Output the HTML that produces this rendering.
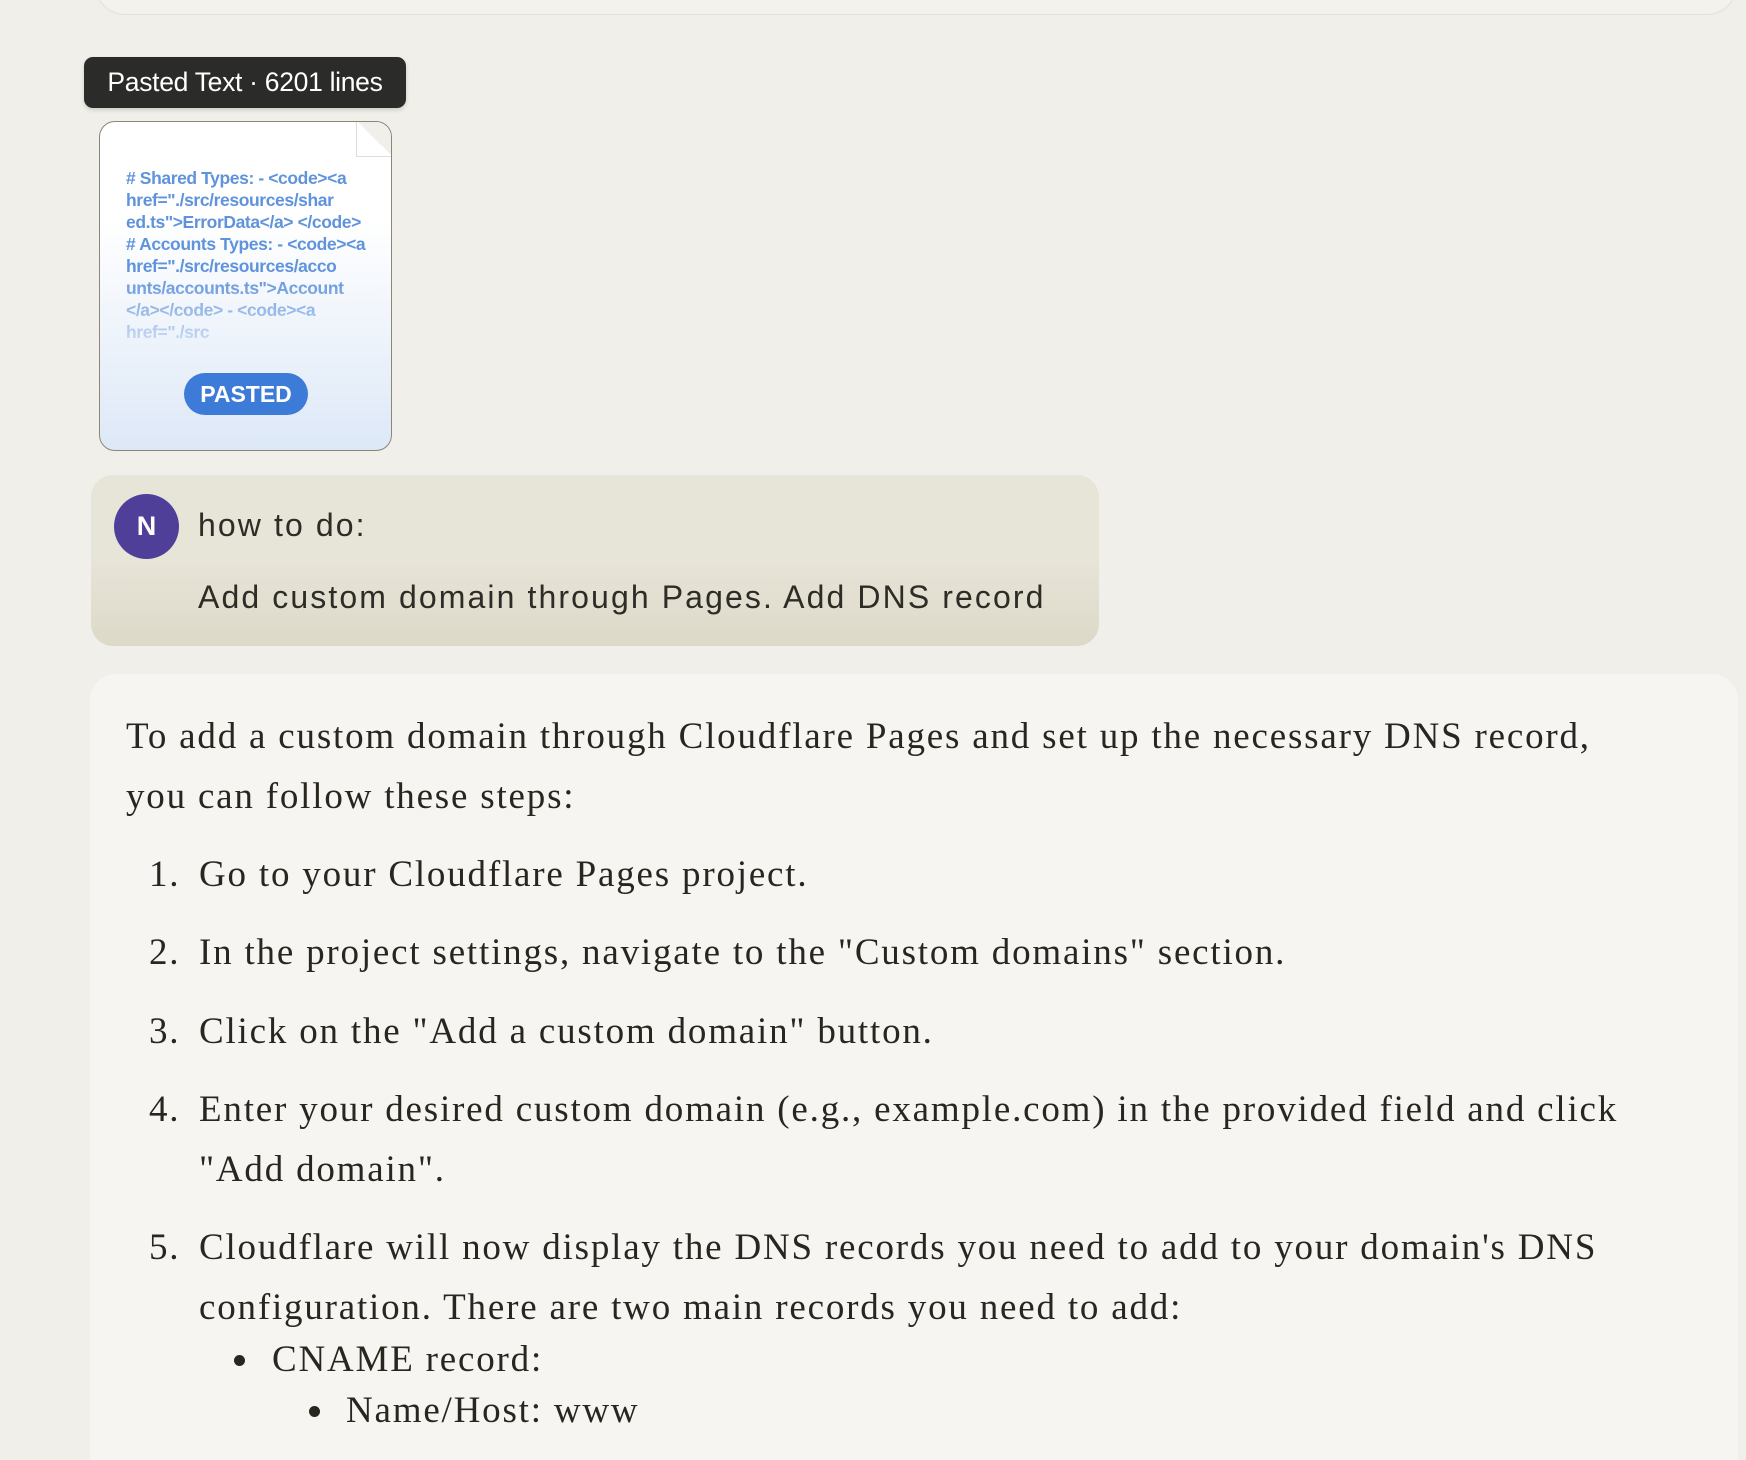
<!DOCTYPE html>
<html><head><meta charset="utf-8"><style>
html,body{margin:0;padding:0;width:1746px;height:1460px;overflow:hidden}
body{background:#f0efe9;position:relative;font-family:"Liberation Sans",sans-serif}
.topcard{position:absolute;left:95px;top:-40px;width:1640px;height:53px;border:1px solid #e2e0d8;border-radius:0 0 30px 30px;background:#f3f2ed}
.label{position:absolute;left:84px;top:57px;width:322px;height:51px;background:#2b2b2a;border-radius:9px;color:#fff;font-size:26.5px;line-height:51px;text-align:center;box-shadow:0 2px 4px rgba(0,0,0,.15);letter-spacing:-0.3px}
.doc{position:absolute;left:99px;top:121px;width:293px;height:330px;border:1px solid #8a8678;border-radius:16px;background:linear-gradient(#fff 30%,#dde8f7);overflow:hidden;box-sizing:border-box}
.fold{position:absolute;right:-1px;top:-1px;width:36px;height:36px;background:#f0efe9}
.fold:after{content:"";position:absolute;left:0;top:0;width:36px;height:36px;background:linear-gradient(45deg,#fff 50%,transparent 50%);border-left:1px solid #ddd;border-bottom:1px solid #ddd;box-sizing:border-box}
.code{position:absolute;left:26px;top:45px;width:245px;font-size:17.5px;font-weight:bold;line-height:22px;color:#5f93dc;overflow-wrap:anywhere;letter-spacing:-0.4px;
-webkit-mask-image:linear-gradient(#000 55%,transparent 100%);height:198px;overflow:hidden}
.pill{position:absolute;left:84px;top:251px;width:124px;height:42px;border-radius:21px;background:#3d7bd8;color:#fff;font-weight:bold;font-size:23px;line-height:42px;text-align:center}
.bubble{position:absolute;left:91px;top:475px;width:1008px;height:171px;border-radius:22px;background:linear-gradient(#e7e4d8 50%,#ddd9c8)}
.av{position:absolute;left:114px;top:494px;width:65px;height:65px;border-radius:50%;background:#4f3f99;color:#fff;font-weight:bold;font-size:27px;line-height:65px;text-align:center}
.u{position:absolute;left:198px;font-size:32px;color:#2e2c26;letter-spacing:2.1px}
.resp{position:absolute;left:90px;top:674px;width:1648px;height:786px;border-radius:26px 26px 0 0;background:#f6f5f1}
.s{position:absolute;font-family:"Liberation Serif",serif;font-size:37px;color:#29261f;letter-spacing:1.8px;white-space:nowrap;line-height:40px}
.dot{position:absolute;width:11px;height:11px;border-radius:50%;background:#29261f}
</style></head><body>
<div class="topcard"></div>
<div class="label">Pasted Text · 6201 lines</div>
<div class="doc"><div class="fold"></div>
<div class="code"># Shared Types: - &lt;code&gt;&lt;a href="./src/resources/shar ed.ts"&gt;ErrorData&lt;/a&gt; &lt;/code&gt; # Accounts Types: - &lt;code&gt;&lt;a href="./src/resources/acco unts/accounts.ts"&gt;Account &lt;/a&gt;&lt;/code&gt; - &lt;code&gt;&lt;a href="./src</div>
<div class="pill">PASTED</div></div>
<div class="bubble"></div>
<div class="av">N</div>
<div class="u" style="top:507px">how to do:</div>
<div class="u" style="top:579px">Add custom domain through Pages. Add DNS record</div>
<div class="resp"></div>
<div class="s" style="left:126px;top:717px">To add a custom domain through Cloudflare Pages and set up the necessary DNS record,</div>
<div class="s" style="left:126px;top:777px">you can follow these steps:</div>
<div class="s" style="left:149px;top:855px">1.</div><div class="s" style="left:199px;top:855px">Go to your Cloudflare Pages project.</div>
<div class="s" style="left:149px;top:933px">2.</div><div class="s" style="left:199px;top:933px">In the project settings, navigate to the "Custom domains" section.</div>
<div class="s" style="left:149px;top:1012px">3.</div><div class="s" style="left:199px;top:1012px">Click on the "Add a custom domain" button.</div>
<div class="s" style="left:149px;top:1090px">4.</div><div class="s" style="left:199px;top:1090px">Enter your desired custom domain (e.g., example.com) in the provided field and click</div>
<div class="s" style="left:199px;top:1150px">"Add domain".</div>
<div class="s" style="left:149px;top:1228px">5.</div><div class="s" style="left:199px;top:1228px">Cloudflare will now display the DNS records you need to add to your domain's DNS</div>
<div class="s" style="left:199px;top:1288px">configuration. There are two main records you need to add:</div>
<div class="dot" style="left:234px;top:1355px"></div><div class="s" style="left:272px;top:1340px">CNAME record:</div>
<div class="dot" style="left:309px;top:1406px"></div><div class="s" style="left:346px;top:1391px">Name/Host: www</div>
</body></html>
